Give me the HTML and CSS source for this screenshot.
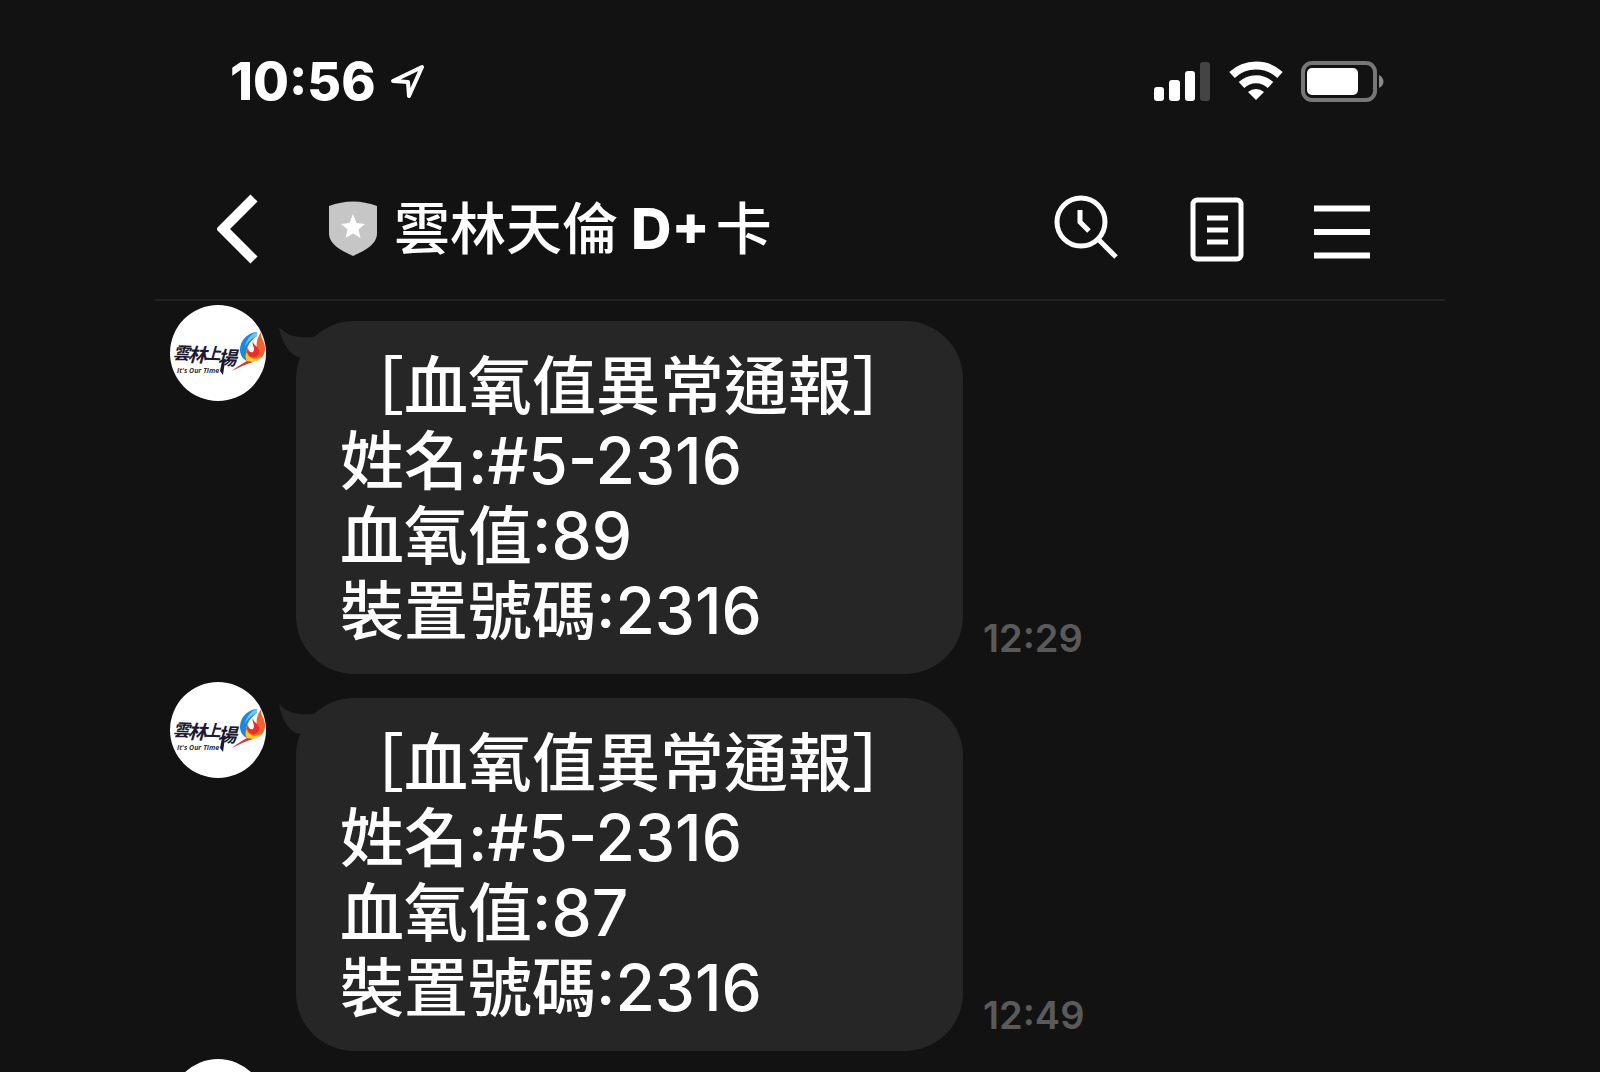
FILE: index.html
```html
<!DOCTYPE html>
<html lang="zh-Hant">
<head>
  <meta charset="utf-8">
  <meta name="viewport" content="width=device-width, initial-scale=1">
  <title>雲林天倫D+卡</title>
  <link rel="stylesheet" href="styles.css">
</head>
<body>
  <!-- shared avatar logo -->
  <svg class="defs" aria-hidden="true">
    <symbol id="logo" viewBox="0 0 96 96">
      <g class="logo-name" transform="rotate(2 35 45)">
        <text x="3" y="55" font-size="17">雲</text>
        <text x="18" y="57" font-size="19">林</text>
        <text x="35" y="54" font-size="16">上</text>
        <text x="48" y="59" font-size="19">場</text>
      </g>
      <path d="M52 56 L55 56 L53 70 L50 66 Z" fill="#1c1830"/>
      <text class="logo-tag" x="7" y="68">It's Our Time</text>
      <path d="M87 27 C77 28 70 36 70 45 C70 50 73 54 77 56 C75 49 76 38 87 31 Z" fill="#1f86d8"/>
      <path d="M87 27 C81 29 76 35 75 42 C78 36 82 33 87 31 Z" fill="#6cc4f2"/>
      <path d="M91 27 C90 33 96 38 95 45 C94 54 86 58 77 56 C75 52 75 48 77 44 C79 50 84 50 86 46 C88 42 84 38 91 27 Z" fill="#f0632a"/>
      <path d="M77 47 C78 54 86 56 92 51 C88 57 82 58 77 56 C75 53 75 50 77 47 Z" fill="#ffc81f"/>
      <path d="M83 36 C81 40 86 43 83 47 C80 48 78 46 78 42 C75 48 80 53 85 52 C91 50 90 45 87 42 C85 40 83 39 83 36 Z" fill="#e8302a"/>
      <path d="M77 56 L83 57 C76 59 70 62 62 66 C68 61 73 58 77 56 Z" fill="#d83a3a"/>
    </symbol>
  </svg>

  <div class="phone">
    <div class="status-bar">
      <div class="clock">
        <span>10:56</span>
        <svg width="36" height="36" viewBox="0 0 36 36" aria-hidden="true">
          <path d="M3 17 L32 3 L19 32 L18 18 Z" fill="none" stroke="#fff" stroke-width="4" stroke-linejoin="round"/>
        </svg>
      </div>
      <div class="indicators">
        <svg width="57" height="42" viewBox="0 0 57 42" aria-hidden="true">
          <g fill="#fff">
            <rect x="0" y="26" width="10" height="14" rx="3"/>
            <rect x="15" y="19" width="11" height="21" rx="3"/>
            <rect x="31" y="10" width="10" height="30" rx="3"/>
          </g>
          <rect x="46" y="1" width="10" height="39" rx="3" fill="#444"/>
        </svg>
        <svg width="54" height="42" viewBox="0 0 54 42" aria-hidden="true">
          <g fill="none" stroke="#fff" stroke-width="8">
            <path d="M3 14 A35 35 0 0 1 51 14"/>
            <path d="M12.500 24 A21 21 0 0 1 41.500 24"/>
          </g>
          <path d="M19 31 A12 12 0 0 1 35 31 L27 39 Z" fill="#fff"/>
        </svg>
        <svg width="84" height="42" viewBox="0 0 84 42" aria-hidden="true">
          <rect x="2" y="2" width="72" height="37" rx="9" fill="none" stroke="#777" stroke-width="4"/>
          <rect x="6" y="7" width="51" height="27" rx="5" fill="#fff"/>
          <path d="M78 14 C84 17 84 24 78 27 Z" fill="#8a8a8a"/>
        </svg>
      </div>
    </div>

    <header class="chat-header">
      <button class="icon-btn" type="button" aria-label="返回">
        <svg width="42" height="70" viewBox="0 0 42 70">
          <path d="M37 4 L6 35 L37 66" fill="none" stroke="#fff" stroke-width="10"/>
        </svg>
      </button>
      <svg class="shield" width="48" height="56" viewBox="0 0 48 56" aria-hidden="true">
        <path d="M0 5 Q24 -4 48 5 V32 C48 43 37 49 24 55 C11 49 0 43 0 32 Z" fill="#c6c6c6"/>
        <path d="M24 13 L27.500 22 L36 23 L29.500 28.500 L31.500 37 L24 32.500 L16.500 37 L18.500 28.500 L12 23 L20.500 22 Z" fill="#fff"/>
      </svg>
      <h1 class="title">雲林天倫<span class="latin">D+</span>卡</h1>
      <div class="actions">
        <button class="icon-btn" type="button" aria-label="搜尋">
          <svg width="66" height="70" viewBox="0 0 66 70">
            <g fill="none" stroke="#fff" stroke-width="5">
              <circle cx="27" cy="28" r="24"/>
              <path d="M26 16 V28 L35 37"/>
              <path d="M44 45 L62 63"/>
            </g>
          </svg>
        </button>
        <button class="icon-btn" type="button" aria-label="記事本">
          <svg width="54" height="70" viewBox="0 0 54 70">
            <rect x="3" y="6" width="48" height="59" rx="4" fill="none" stroke="#fff" stroke-width="5"/>
            <path d="M17 24 H38 M17 36 H38 M17 48 H38" stroke="#fff" stroke-width="5"/>
          </svg>
        </button>
        <button class="icon-btn" type="button" aria-label="選單">
          <svg width="56" height="70" viewBox="0 0 56 70">
            <path d="M0 14.500 H56 M0 38 H56 M0 61.500 H56" stroke="#fff" stroke-width="6"/>
          </svg>
        </button>
      </div>
    </header>

    <main class="chat">
      <div class="message">
        <svg class="avatar" role="img" aria-label="雲林上場"><use href="#logo"/></svg>
        <div class="bubble">
          <svg class="tail" width="44" height="40" viewBox="0 0 44 40" aria-hidden="true">
            <path d="M0 0 C9 10 20 11 36 10 L42 20 L20 30 C12 28 3 18 0 0 Z" fill="#262626"/>
          </svg>
          <p>［血氧值異常通報］</p>
          <p>姓名:#5-2316</p>
          <p>血氧值:89</p>
          <p>裝置號碼:2316</p>
        </div>
        <time class="time">12:29</time>
      </div>

      <div class="message">
        <svg class="avatar" role="img" aria-label="雲林上場"><use href="#logo"/></svg>
        <div class="bubble">
          <svg class="tail" width="44" height="40" viewBox="0 0 44 40" aria-hidden="true">
            <path d="M0 0 C9 10 20 11 36 10 L42 20 L20 30 C12 28 3 18 0 0 Z" fill="#262626"/>
          </svg>
          <p>［血氧值異常通報］</p>
          <p>姓名:#5-2316</p>
          <p>血氧值:87</p>
          <p>裝置號碼:2316</p>
        </div>
        <time class="time">12:49</time>
      </div>

      <div class="message">
        <svg class="avatar" aria-hidden="true"></svg>
      </div>
    </main>
  </div>
</body>
</html>
```

FILE: styles.css
```css
* {
  box-sizing: border-box;
}
body {
  margin: 0;
  height: 100vh;
  overflow: hidden;
  background-color: #121212;
  color: #fff;
  font-family: Inter, "Noto Sans CJK TC", sans-serif;
}
.defs {
  display: none;
}
.phone {
  max-width: 1290px;
  margin: 0 auto;
}

/* status bar */
.status-bar {
  display: flex;
  justify-content: space-between;
  align-items: center;
  padding: 51px 60px 0 75px;
}
.clock {
  display: flex;
  align-items: center;
  gap: 14px;
  font-size: 52px;
  line-height: 62px;
  font-weight: 800;
}
.indicators {
  display: flex;
  gap: 18px;
}

/* chat header */
.chat-header {
  display: flex;
  align-items: center;
  padding: 81px 75px 35px 62px;
  border-bottom: 2px solid #222;
}
.icon-btn {
  display: flex;
  padding: 0;
  border: 0;
  background: none;
  color: inherit;
  cursor: pointer;
}
.shield {
  margin-left: 70px;
}
.title {
  margin: 0 0 0 17px;
  font-size: 56px;
  line-height: 70px;
  font-weight: 500;
}
.latin {
  margin: 0 6px 0 13px;
  font-weight: 800;
}
.actions {
  display: flex;
  gap: 70px;
  margin-left: auto;
}

/* messages */
.chat {
  padding: 4px 15px 0;
}
.message {
  display: flex;
  align-items: flex-start;
  margin-bottom: 8px;
}
.avatar {
  flex: none;
  width: 96px;
  height: 96px;
  border-radius: 50%;
  background-color: #fff;
}
.logo-name {
  fill: #1c1830;
  font-family: "Noto Sans CJK TC", sans-serif;
  font-weight: 700;
  font-style: italic;
}
.logo-tag {
  fill: #333;
  font: italic 700 7px "Open Sans", sans-serif;
}
.bubble {
  position: relative;
  width: 667px;
  margin: 16px 20px 0 30px;
  padding: 27px 44px 26px;
  border-radius: 58px;
  background-color: #262626;
  font-size: 64px;
  line-height: 75px;
  font-weight: 500;
}
.bubble p {
  margin: 0;
  white-space: nowrap;
}
.tail {
  position: absolute;
  top: 6px;
  left: -17px;
}
.time {
  align-self: flex-end;
  padding-bottom: 13px;
  color: #5a5a5a;
  font-size: 38px;
  line-height: 46px;
  font-weight: 600;
}
```
